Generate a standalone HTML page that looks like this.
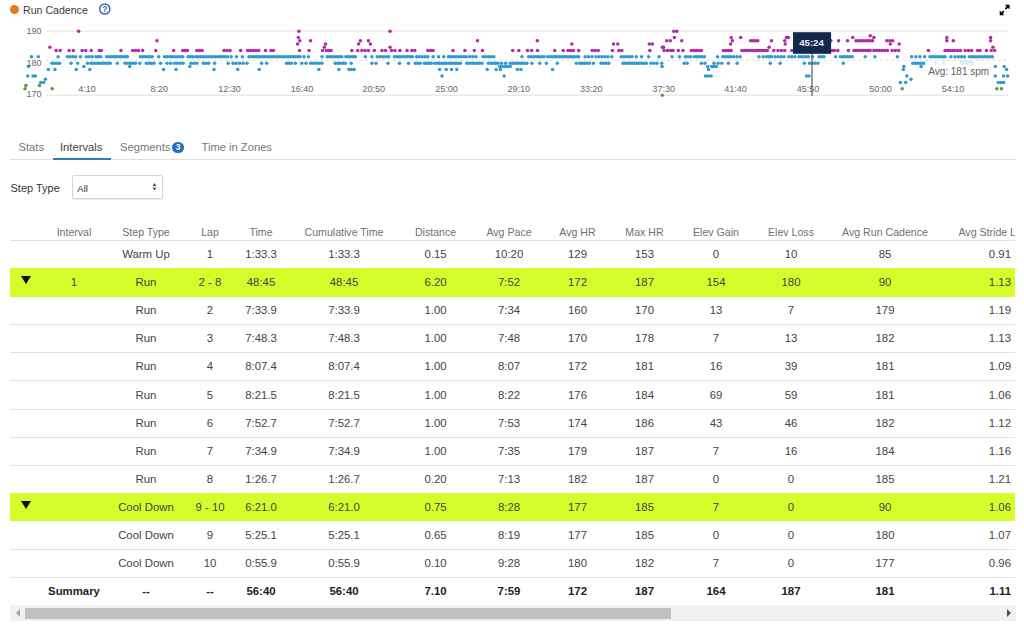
<!DOCTYPE html>
<html><head><meta charset="utf-8"><style>
html,body{margin:0;padding:0;background:#fff;}
body{width:1024px;height:625px;overflow:hidden;position:relative;font-family:"Liberation Sans",sans-serif;}
.c{position:absolute;width:120px;text-align:center;white-space:nowrap;line-height:14px;}
.h{font-size:10.6px;color:#707070;line-height:14px;}
.d{font-size:11.4px;color:#444;}
.b{font-weight:bold;color:#222;}
.r{position:absolute;right:13px;text-align:right;line-height:14px;white-space:nowrap;}
.ln{position:absolute;left:10px;width:1004.5px;height:1px;background:#e2e2e2;}
.grn{position:absolute;left:10px;width:1004.5px;background:#d5fd2c;}
.tri{position:absolute;left:20.8px;width:0;height:0;border-left:5px solid transparent;border-right:5px solid transparent;border-top:8px solid #111;}
.tab{position:absolute;top:140px;font-size:11.2px;color:#777;line-height:14px;white-space:nowrap;}
</style></head><body>
<div style="position:absolute;left:9.8px;top:5px;width:9px;height:9px;border-radius:50%;background:#e8791a"></div>
<div style="position:absolute;left:23px;top:3px;font-size:10.6px;color:#3a3a3a;line-height:14px;white-space:nowrap">Run Cadence</div>
<svg width="16" height="16" style="position:absolute;left:97px;top:1px" viewBox="0 0 16 16"><circle cx="7.8" cy="8" r="5.1" fill="none" stroke="#3d70aa" stroke-width="1.5"/><text x="7.8" y="11.1" text-anchor="middle" font-size="9" font-weight="bold" fill="#4a6a98" font-family="Liberation Sans">?</text></svg>
<svg width="14" height="14" style="position:absolute;left:998px;top:3px" viewBox="0 0 14 14"><path d="M6.9 1.8 H11.6 V6.5 Z M1.7 12.2 V7.5 L6.4 12.2 Z" fill="#000"/><path d="M9.6 3.8 L7.4 6 M3.7 10.3 L5.9 8.1" stroke="#000" stroke-width="1.8"/></svg>
<svg width="1024" height="110" style="position:absolute;left:0;top:0">
<line x1="46" y1="31.2" x2="1008" y2="31.2" stroke="#e4e4e4" stroke-width="1"/>
<line x1="46" y1="95.2" x2="1008" y2="95.2" stroke="#e0e0e0" stroke-width="1"/>
<line x1="46" y1="60.2" x2="1008" y2="60.2" stroke="#dcd8cc" stroke-width="1" stroke-dasharray="2.5 3.1"/>
<circle cx="78.6" cy="31.2" r="1.75" fill="#b02aa2"/>
<circle cx="298.9" cy="31.2" r="1.75" fill="#b02aa2"/>
<circle cx="390.0" cy="31.2" r="1.75" fill="#b02aa2"/>
<circle cx="673.9" cy="31.2" r="1.75" fill="#b02aa2"/>
<circle cx="676.8" cy="31.2" r="1.75" fill="#b02aa2"/>
<circle cx="298.3" cy="37.6" r="1.75" fill="#b02aa2"/>
<circle cx="674.4" cy="37.6" r="1.75" fill="#b02aa2"/>
<circle cx="731.2" cy="37.6" r="1.75" fill="#b02aa2"/>
<circle cx="740.7" cy="37.6" r="1.75" fill="#b02aa2"/>
<circle cx="786.5" cy="37.6" r="1.75" fill="#b02aa2"/>
<circle cx="788.3" cy="37.6" r="1.75" fill="#b02aa2"/>
<circle cx="852.8" cy="37.6" r="1.75" fill="#b02aa2"/>
<circle cx="873.8" cy="37.6" r="1.75" fill="#b02aa2"/>
<circle cx="946.8" cy="37.6" r="1.75" fill="#b02aa2"/>
<circle cx="990.6" cy="37.6" r="1.75" fill="#b02aa2"/>
<circle cx="870.2" cy="35.7" r="1.75" fill="#b02aa2"/>
<circle cx="157.0" cy="40.8" r="1.75" fill="#b02aa2"/>
<circle cx="299.8" cy="40.8" r="1.75" fill="#b02aa2"/>
<circle cx="310.5" cy="40.8" r="1.75" fill="#b02aa2"/>
<circle cx="360.4" cy="40.8" r="1.75" fill="#b02aa2"/>
<circle cx="368.4" cy="40.8" r="1.75" fill="#b02aa2"/>
<circle cx="477.5" cy="40.8" r="1.75" fill="#b02aa2"/>
<circle cx="537.3" cy="40.8" r="1.75" fill="#b02aa2"/>
<circle cx="666.7" cy="40.8" r="1.75" fill="#b02aa2"/>
<circle cx="670.3" cy="40.8" r="1.75" fill="#b02aa2"/>
<circle cx="681.8" cy="40.8" r="1.75" fill="#b02aa2"/>
<circle cx="732.4" cy="40.8" r="1.75" fill="#b02aa2"/>
<circle cx="750.7" cy="40.8" r="1.75" fill="#b02aa2"/>
<circle cx="753.1" cy="40.8" r="1.75" fill="#b02aa2"/>
<circle cx="755.4" cy="40.8" r="1.75" fill="#b02aa2"/>
<circle cx="757.8" cy="40.8" r="1.75" fill="#b02aa2"/>
<circle cx="771.5" cy="40.8" r="1.75" fill="#b02aa2"/>
<circle cx="784.7" cy="40.8" r="1.75" fill="#b02aa2"/>
<circle cx="830.9" cy="40.8" r="1.75" fill="#b02aa2"/>
<circle cx="838.6" cy="40.8" r="1.75" fill="#b02aa2"/>
<circle cx="847.5" cy="40.8" r="1.75" fill="#b02aa2"/>
<circle cx="856.0" cy="40.8" r="1.75" fill="#b02aa2"/>
<circle cx="858.4" cy="40.8" r="1.75" fill="#b02aa2"/>
<circle cx="860.7" cy="40.8" r="1.75" fill="#b02aa2"/>
<circle cx="863.1" cy="40.8" r="1.75" fill="#b02aa2"/>
<circle cx="865.5" cy="40.8" r="1.75" fill="#b02aa2"/>
<circle cx="867.9" cy="40.8" r="1.75" fill="#b02aa2"/>
<circle cx="870.2" cy="40.8" r="1.75" fill="#b02aa2"/>
<circle cx="872.6" cy="40.8" r="1.75" fill="#b02aa2"/>
<circle cx="886.8" cy="40.8" r="1.75" fill="#b02aa2"/>
<circle cx="889.8" cy="40.8" r="1.75" fill="#b02aa2"/>
<circle cx="892.7" cy="40.8" r="1.75" fill="#b02aa2"/>
<circle cx="946.8" cy="40.8" r="1.75" fill="#b02aa2"/>
<circle cx="953.3" cy="40.8" r="1.75" fill="#b02aa2"/>
<circle cx="990.6" cy="40.8" r="1.75" fill="#b02aa2"/>
<circle cx="297.5" cy="44.0" r="1.75" fill="#b02aa2"/>
<circle cx="325.5" cy="44.0" r="1.75" fill="#b02aa2"/>
<circle cx="358.6" cy="44.0" r="1.75" fill="#b02aa2"/>
<circle cx="370.4" cy="44.0" r="1.75" fill="#b02aa2"/>
<circle cx="571.9" cy="44.0" r="1.75" fill="#b02aa2"/>
<circle cx="613.5" cy="44.0" r="1.75" fill="#b02aa2"/>
<circle cx="617.8" cy="44.0" r="1.75" fill="#b02aa2"/>
<circle cx="649.3" cy="44.0" r="1.75" fill="#b02aa2"/>
<circle cx="652.3" cy="44.0" r="1.75" fill="#b02aa2"/>
<circle cx="730.6" cy="44.0" r="1.75" fill="#b02aa2"/>
<circle cx="785.3" cy="44.0" r="1.75" fill="#b02aa2"/>
<circle cx="890.3" cy="44.0" r="1.75" fill="#b02aa2"/>
<circle cx="899.2" cy="44.0" r="1.75" fill="#b02aa2"/>
<circle cx="49.9" cy="47.2" r="1.75" fill="#b02aa2"/>
<circle cx="324.3" cy="47.2" r="1.75" fill="#b02aa2"/>
<circle cx="390.0" cy="47.2" r="1.75" fill="#b02aa2"/>
<circle cx="662.3" cy="47.2" r="1.75" fill="#b02aa2"/>
<circle cx="663.5" cy="47.2" r="1.75" fill="#b02aa2"/>
<circle cx="769.1" cy="47.2" r="1.75" fill="#b02aa2"/>
<circle cx="993.0" cy="47.2" r="1.75" fill="#b02aa2"/>
<circle cx="56.1" cy="50.4" r="1.75" fill="#b02aa2"/>
<circle cx="60.2" cy="50.4" r="1.75" fill="#b02aa2"/>
<circle cx="69.1" cy="50.4" r="1.75" fill="#b02aa2"/>
<circle cx="73.3" cy="50.4" r="1.75" fill="#b02aa2"/>
<circle cx="82.1" cy="50.4" r="1.75" fill="#b02aa2"/>
<circle cx="85.7" cy="50.4" r="1.75" fill="#b02aa2"/>
<circle cx="91.2" cy="50.4" r="1.75" fill="#b02aa2"/>
<circle cx="99.3" cy="50.4" r="1.75" fill="#b02aa2"/>
<circle cx="101.3" cy="50.4" r="1.75" fill="#b02aa2"/>
<circle cx="120.9" cy="50.4" r="1.75" fill="#b02aa2"/>
<circle cx="132.7" cy="50.4" r="1.75" fill="#b02aa2"/>
<circle cx="135.6" cy="50.4" r="1.75" fill="#b02aa2"/>
<circle cx="138.6" cy="50.4" r="1.75" fill="#b02aa2"/>
<circle cx="142.7" cy="50.4" r="1.75" fill="#b02aa2"/>
<circle cx="155.8" cy="50.4" r="1.75" fill="#b02aa2"/>
<circle cx="173.6" cy="50.4" r="1.75" fill="#b02aa2"/>
<circle cx="182.7" cy="50.4" r="1.75" fill="#b02aa2"/>
<circle cx="185.1" cy="50.4" r="1.75" fill="#b02aa2"/>
<circle cx="187.4" cy="50.4" r="1.75" fill="#b02aa2"/>
<circle cx="196.9" cy="50.4" r="1.75" fill="#b02aa2"/>
<circle cx="199.6" cy="50.4" r="1.75" fill="#b02aa2"/>
<circle cx="202.2" cy="50.4" r="1.75" fill="#b02aa2"/>
<circle cx="224.0" cy="50.4" r="1.75" fill="#b02aa2"/>
<circle cx="227.0" cy="50.4" r="1.75" fill="#b02aa2"/>
<circle cx="230.0" cy="50.4" r="1.75" fill="#b02aa2"/>
<circle cx="240.6" cy="50.4" r="1.75" fill="#b02aa2"/>
<circle cx="247.7" cy="50.4" r="1.75" fill="#b02aa2"/>
<circle cx="250.4" cy="50.4" r="1.75" fill="#b02aa2"/>
<circle cx="253.2" cy="50.4" r="1.75" fill="#b02aa2"/>
<circle cx="255.9" cy="50.4" r="1.75" fill="#b02aa2"/>
<circle cx="258.7" cy="50.4" r="1.75" fill="#b02aa2"/>
<circle cx="265.5" cy="50.4" r="1.75" fill="#b02aa2"/>
<circle cx="271.0" cy="50.4" r="1.75" fill="#b02aa2"/>
<circle cx="273.4" cy="50.4" r="1.75" fill="#b02aa2"/>
<circle cx="299.5" cy="50.4" r="1.75" fill="#b02aa2"/>
<circle cx="309.0" cy="50.4" r="1.75" fill="#b02aa2"/>
<circle cx="322.6" cy="50.4" r="1.75" fill="#b02aa2"/>
<circle cx="326.4" cy="50.4" r="1.75" fill="#b02aa2"/>
<circle cx="328.8" cy="50.4" r="1.75" fill="#b02aa2"/>
<circle cx="331.1" cy="50.4" r="1.75" fill="#b02aa2"/>
<circle cx="351.8" cy="50.4" r="1.75" fill="#b02aa2"/>
<circle cx="357.7" cy="50.4" r="1.75" fill="#b02aa2"/>
<circle cx="361.9" cy="50.4" r="1.75" fill="#b02aa2"/>
<circle cx="365.1" cy="50.4" r="1.75" fill="#b02aa2"/>
<circle cx="368.4" cy="50.4" r="1.75" fill="#b02aa2"/>
<circle cx="374.3" cy="50.4" r="1.75" fill="#b02aa2"/>
<circle cx="382.0" cy="50.4" r="1.75" fill="#b02aa2"/>
<circle cx="385.5" cy="50.4" r="1.75" fill="#b02aa2"/>
<circle cx="391.5" cy="50.4" r="1.75" fill="#b02aa2"/>
<circle cx="395.0" cy="50.4" r="1.75" fill="#b02aa2"/>
<circle cx="399.9" cy="50.4" r="1.75" fill="#b02aa2"/>
<circle cx="407.1" cy="50.4" r="1.75" fill="#b02aa2"/>
<circle cx="411.8" cy="50.4" r="1.75" fill="#b02aa2"/>
<circle cx="414.8" cy="50.4" r="1.75" fill="#b02aa2"/>
<circle cx="427.8" cy="50.4" r="1.75" fill="#b02aa2"/>
<circle cx="430.5" cy="50.4" r="1.75" fill="#b02aa2"/>
<circle cx="433.1" cy="50.4" r="1.75" fill="#b02aa2"/>
<circle cx="453.0" cy="50.4" r="1.75" fill="#b02aa2"/>
<circle cx="464.9" cy="50.4" r="1.75" fill="#b02aa2"/>
<circle cx="474.3" cy="50.4" r="1.75" fill="#b02aa2"/>
<circle cx="482.5" cy="50.4" r="1.75" fill="#b02aa2"/>
<circle cx="512.7" cy="50.4" r="1.75" fill="#b02aa2"/>
<circle cx="518.8" cy="50.4" r="1.75" fill="#b02aa2"/>
<circle cx="527.5" cy="50.4" r="1.75" fill="#b02aa2"/>
<circle cx="531.6" cy="50.4" r="1.75" fill="#b02aa2"/>
<circle cx="537.5" cy="50.4" r="1.75" fill="#b02aa2"/>
<circle cx="554.7" cy="50.4" r="1.75" fill="#b02aa2"/>
<circle cx="563.2" cy="50.4" r="1.75" fill="#b02aa2"/>
<circle cx="568.0" cy="50.4" r="1.75" fill="#b02aa2"/>
<circle cx="570.6" cy="50.4" r="1.75" fill="#b02aa2"/>
<circle cx="573.3" cy="50.4" r="1.75" fill="#b02aa2"/>
<circle cx="578.6" cy="50.4" r="1.75" fill="#b02aa2"/>
<circle cx="592.2" cy="50.4" r="1.75" fill="#b02aa2"/>
<circle cx="595.2" cy="50.4" r="1.75" fill="#b02aa2"/>
<circle cx="598.2" cy="50.4" r="1.75" fill="#b02aa2"/>
<circle cx="612.4" cy="50.4" r="1.75" fill="#b02aa2"/>
<circle cx="618.9" cy="50.4" r="1.75" fill="#b02aa2"/>
<circle cx="621.8" cy="50.4" r="1.75" fill="#b02aa2"/>
<circle cx="649.9" cy="50.4" r="1.75" fill="#b02aa2"/>
<circle cx="664.1" cy="50.4" r="1.75" fill="#b02aa2"/>
<circle cx="667.4" cy="50.4" r="1.75" fill="#b02aa2"/>
<circle cx="670.6" cy="50.4" r="1.75" fill="#b02aa2"/>
<circle cx="673.0" cy="50.4" r="1.75" fill="#b02aa2"/>
<circle cx="678.3" cy="50.4" r="1.75" fill="#b02aa2"/>
<circle cx="683.0" cy="50.4" r="1.75" fill="#b02aa2"/>
<circle cx="691.3" cy="50.4" r="1.75" fill="#b02aa2"/>
<circle cx="693.8" cy="50.4" r="1.75" fill="#b02aa2"/>
<circle cx="696.3" cy="50.4" r="1.75" fill="#b02aa2"/>
<circle cx="698.9" cy="50.4" r="1.75" fill="#b02aa2"/>
<circle cx="701.4" cy="50.4" r="1.75" fill="#b02aa2"/>
<circle cx="723.5" cy="50.4" r="1.75" fill="#b02aa2"/>
<circle cx="726.1" cy="50.4" r="1.75" fill="#b02aa2"/>
<circle cx="728.6" cy="50.4" r="1.75" fill="#b02aa2"/>
<circle cx="731.2" cy="50.4" r="1.75" fill="#b02aa2"/>
<circle cx="741.9" cy="50.4" r="1.75" fill="#b02aa2"/>
<circle cx="744.2" cy="50.4" r="1.75" fill="#b02aa2"/>
<circle cx="746.5" cy="50.4" r="1.75" fill="#b02aa2"/>
<circle cx="748.8" cy="50.4" r="1.75" fill="#b02aa2"/>
<circle cx="751.1" cy="50.4" r="1.75" fill="#b02aa2"/>
<circle cx="753.4" cy="50.4" r="1.75" fill="#b02aa2"/>
<circle cx="755.8" cy="50.4" r="1.75" fill="#b02aa2"/>
<circle cx="758.1" cy="50.4" r="1.75" fill="#b02aa2"/>
<circle cx="760.4" cy="50.4" r="1.75" fill="#b02aa2"/>
<circle cx="762.7" cy="50.4" r="1.75" fill="#b02aa2"/>
<circle cx="765.0" cy="50.4" r="1.75" fill="#b02aa2"/>
<circle cx="767.3" cy="50.4" r="1.75" fill="#b02aa2"/>
<circle cx="773.8" cy="50.4" r="1.75" fill="#b02aa2"/>
<circle cx="778.0" cy="50.4" r="1.75" fill="#b02aa2"/>
<circle cx="781.4" cy="50.4" r="1.75" fill="#b02aa2"/>
<circle cx="784.7" cy="50.4" r="1.75" fill="#b02aa2"/>
<circle cx="791.8" cy="50.4" r="1.75" fill="#b02aa2"/>
<circle cx="832.0" cy="50.4" r="1.75" fill="#b02aa2"/>
<circle cx="834.4" cy="50.4" r="1.75" fill="#b02aa2"/>
<circle cx="837.8" cy="50.4" r="1.75" fill="#b02aa2"/>
<circle cx="848.4" cy="50.4" r="1.75" fill="#b02aa2"/>
<circle cx="854.0" cy="50.4" r="1.75" fill="#b02aa2"/>
<circle cx="856.3" cy="50.4" r="1.75" fill="#b02aa2"/>
<circle cx="858.6" cy="50.4" r="1.75" fill="#b02aa2"/>
<circle cx="860.9" cy="50.4" r="1.75" fill="#b02aa2"/>
<circle cx="863.3" cy="50.4" r="1.75" fill="#b02aa2"/>
<circle cx="865.6" cy="50.4" r="1.75" fill="#b02aa2"/>
<circle cx="867.9" cy="50.4" r="1.75" fill="#b02aa2"/>
<circle cx="870.2" cy="50.4" r="1.75" fill="#b02aa2"/>
<circle cx="873.8" cy="50.4" r="1.75" fill="#b02aa2"/>
<circle cx="876.5" cy="50.4" r="1.75" fill="#b02aa2"/>
<circle cx="879.2" cy="50.4" r="1.75" fill="#b02aa2"/>
<circle cx="882.0" cy="50.4" r="1.75" fill="#b02aa2"/>
<circle cx="884.7" cy="50.4" r="1.75" fill="#b02aa2"/>
<circle cx="887.4" cy="50.4" r="1.75" fill="#b02aa2"/>
<circle cx="892.1" cy="50.4" r="1.75" fill="#b02aa2"/>
<circle cx="895.4" cy="50.4" r="1.75" fill="#b02aa2"/>
<circle cx="898.6" cy="50.4" r="1.75" fill="#b02aa2"/>
<circle cx="928.4" cy="50.4" r="1.75" fill="#b02aa2"/>
<circle cx="945.0" cy="50.4" r="1.75" fill="#b02aa2"/>
<circle cx="947.6" cy="50.4" r="1.75" fill="#b02aa2"/>
<circle cx="950.1" cy="50.4" r="1.75" fill="#b02aa2"/>
<circle cx="952.7" cy="50.4" r="1.75" fill="#b02aa2"/>
<circle cx="954.5" cy="50.4" r="1.75" fill="#b02aa2"/>
<circle cx="957.5" cy="50.4" r="1.75" fill="#b02aa2"/>
<circle cx="960.4" cy="50.4" r="1.75" fill="#b02aa2"/>
<circle cx="965.1" cy="50.4" r="1.75" fill="#b02aa2"/>
<circle cx="968.4" cy="50.4" r="1.75" fill="#b02aa2"/>
<circle cx="971.6" cy="50.4" r="1.75" fill="#b02aa2"/>
<circle cx="977.6" cy="50.4" r="1.75" fill="#b02aa2"/>
<circle cx="980.0" cy="50.4" r="1.75" fill="#b02aa2"/>
<circle cx="986.4" cy="50.4" r="1.75" fill="#b02aa2"/>
<circle cx="991.2" cy="50.4" r="1.75" fill="#b02aa2"/>
<circle cx="994.7" cy="50.4" r="1.75" fill="#b02aa2"/>
<circle cx="31.5" cy="56.8" r="1.75" fill="#2e9ad0"/>
<circle cx="38.3" cy="56.8" r="1.75" fill="#2e9ad0"/>
<circle cx="58.1" cy="56.8" r="1.75" fill="#2e9ad0"/>
<circle cx="67.3" cy="56.8" r="1.75" fill="#2e9ad0"/>
<circle cx="70.1" cy="56.8" r="1.75" fill="#2e9ad0"/>
<circle cx="72.8" cy="56.8" r="1.75" fill="#2e9ad0"/>
<circle cx="75.6" cy="56.8" r="1.75" fill="#2e9ad0"/>
<circle cx="80.4" cy="56.8" r="1.75" fill="#2e9ad0"/>
<circle cx="86.3" cy="56.8" r="1.75" fill="#2e9ad0"/>
<circle cx="89.2" cy="56.8" r="1.75" fill="#2e9ad0"/>
<circle cx="92.2" cy="56.8" r="1.75" fill="#2e9ad0"/>
<circle cx="96.0" cy="56.8" r="1.75" fill="#2e9ad0"/>
<circle cx="98.3" cy="56.8" r="1.75" fill="#2e9ad0"/>
<circle cx="100.7" cy="56.8" r="1.75" fill="#2e9ad0"/>
<circle cx="106.7" cy="56.8" r="1.75" fill="#2e9ad0"/>
<circle cx="109.0" cy="56.8" r="1.75" fill="#2e9ad0"/>
<circle cx="111.3" cy="56.8" r="1.75" fill="#2e9ad0"/>
<circle cx="113.6" cy="56.8" r="1.75" fill="#2e9ad0"/>
<circle cx="115.9" cy="56.8" r="1.75" fill="#2e9ad0"/>
<circle cx="118.2" cy="56.8" r="1.75" fill="#2e9ad0"/>
<circle cx="120.5" cy="56.8" r="1.75" fill="#2e9ad0"/>
<circle cx="122.8" cy="56.8" r="1.75" fill="#2e9ad0"/>
<circle cx="125.1" cy="56.8" r="1.75" fill="#2e9ad0"/>
<circle cx="127.4" cy="56.8" r="1.75" fill="#2e9ad0"/>
<circle cx="140.4" cy="56.8" r="1.75" fill="#2e9ad0"/>
<circle cx="142.8" cy="56.8" r="1.75" fill="#2e9ad0"/>
<circle cx="145.1" cy="56.8" r="1.75" fill="#2e9ad0"/>
<circle cx="147.5" cy="56.8" r="1.75" fill="#2e9ad0"/>
<circle cx="149.8" cy="56.8" r="1.75" fill="#2e9ad0"/>
<circle cx="152.2" cy="56.8" r="1.75" fill="#2e9ad0"/>
<circle cx="158.7" cy="56.8" r="1.75" fill="#2e9ad0"/>
<circle cx="164.6" cy="56.8" r="1.75" fill="#2e9ad0"/>
<circle cx="167.2" cy="56.8" r="1.75" fill="#2e9ad0"/>
<circle cx="169.8" cy="56.8" r="1.75" fill="#2e9ad0"/>
<circle cx="172.4" cy="56.8" r="1.75" fill="#2e9ad0"/>
<circle cx="174.9" cy="56.8" r="1.75" fill="#2e9ad0"/>
<circle cx="177.5" cy="56.8" r="1.75" fill="#2e9ad0"/>
<circle cx="180.1" cy="56.8" r="1.75" fill="#2e9ad0"/>
<circle cx="182.7" cy="56.8" r="1.75" fill="#2e9ad0"/>
<circle cx="188.0" cy="56.8" r="1.75" fill="#2e9ad0"/>
<circle cx="190.3" cy="56.8" r="1.75" fill="#2e9ad0"/>
<circle cx="192.7" cy="56.8" r="1.75" fill="#2e9ad0"/>
<circle cx="195.7" cy="56.8" r="1.75" fill="#2e9ad0"/>
<circle cx="198.2" cy="56.8" r="1.75" fill="#2e9ad0"/>
<circle cx="200.6" cy="56.8" r="1.75" fill="#2e9ad0"/>
<circle cx="203.1" cy="56.8" r="1.75" fill="#2e9ad0"/>
<circle cx="205.5" cy="56.8" r="1.75" fill="#2e9ad0"/>
<circle cx="208.0" cy="56.8" r="1.75" fill="#2e9ad0"/>
<circle cx="210.4" cy="56.8" r="1.75" fill="#2e9ad0"/>
<circle cx="212.9" cy="56.8" r="1.75" fill="#2e9ad0"/>
<circle cx="215.3" cy="56.8" r="1.75" fill="#2e9ad0"/>
<circle cx="217.8" cy="56.8" r="1.75" fill="#2e9ad0"/>
<circle cx="220.2" cy="56.8" r="1.75" fill="#2e9ad0"/>
<circle cx="222.7" cy="56.8" r="1.75" fill="#2e9ad0"/>
<circle cx="225.1" cy="56.8" r="1.75" fill="#2e9ad0"/>
<circle cx="227.6" cy="56.8" r="1.75" fill="#2e9ad0"/>
<circle cx="231.2" cy="56.8" r="1.75" fill="#2e9ad0"/>
<circle cx="236.5" cy="56.8" r="1.75" fill="#2e9ad0"/>
<circle cx="242.4" cy="56.8" r="1.75" fill="#2e9ad0"/>
<circle cx="249.0" cy="56.8" r="1.75" fill="#2e9ad0"/>
<circle cx="251.3" cy="56.8" r="1.75" fill="#2e9ad0"/>
<circle cx="253.6" cy="56.8" r="1.75" fill="#2e9ad0"/>
<circle cx="256.0" cy="56.8" r="1.75" fill="#2e9ad0"/>
<circle cx="258.3" cy="56.8" r="1.75" fill="#2e9ad0"/>
<circle cx="260.6" cy="56.8" r="1.75" fill="#2e9ad0"/>
<circle cx="262.9" cy="56.8" r="1.75" fill="#2e9ad0"/>
<circle cx="265.2" cy="56.8" r="1.75" fill="#2e9ad0"/>
<circle cx="267.6" cy="56.8" r="1.75" fill="#2e9ad0"/>
<circle cx="269.9" cy="56.8" r="1.75" fill="#2e9ad0"/>
<circle cx="272.2" cy="56.8" r="1.75" fill="#2e9ad0"/>
<circle cx="274.5" cy="56.8" r="1.75" fill="#2e9ad0"/>
<circle cx="276.8" cy="56.8" r="1.75" fill="#2e9ad0"/>
<circle cx="279.1" cy="56.8" r="1.75" fill="#2e9ad0"/>
<circle cx="281.5" cy="56.8" r="1.75" fill="#2e9ad0"/>
<circle cx="283.8" cy="56.8" r="1.75" fill="#2e9ad0"/>
<circle cx="286.1" cy="56.8" r="1.75" fill="#2e9ad0"/>
<circle cx="288.4" cy="56.8" r="1.75" fill="#2e9ad0"/>
<circle cx="290.7" cy="56.8" r="1.75" fill="#2e9ad0"/>
<circle cx="293.1" cy="56.8" r="1.75" fill="#2e9ad0"/>
<circle cx="295.4" cy="56.8" r="1.75" fill="#2e9ad0"/>
<circle cx="297.7" cy="56.8" r="1.75" fill="#2e9ad0"/>
<circle cx="300.0" cy="56.8" r="1.75" fill="#2e9ad0"/>
<circle cx="304.0" cy="56.8" r="1.75" fill="#2e9ad0"/>
<circle cx="308.4" cy="56.8" r="1.75" fill="#2e9ad0"/>
<circle cx="322.0" cy="56.8" r="1.75" fill="#2e9ad0"/>
<circle cx="327.3" cy="56.8" r="1.75" fill="#2e9ad0"/>
<circle cx="329.7" cy="56.8" r="1.75" fill="#2e9ad0"/>
<circle cx="332.1" cy="56.8" r="1.75" fill="#2e9ad0"/>
<circle cx="334.6" cy="56.8" r="1.75" fill="#2e9ad0"/>
<circle cx="337.0" cy="56.8" r="1.75" fill="#2e9ad0"/>
<circle cx="339.4" cy="56.8" r="1.75" fill="#2e9ad0"/>
<circle cx="341.8" cy="56.8" r="1.75" fill="#2e9ad0"/>
<circle cx="345.9" cy="56.8" r="1.75" fill="#2e9ad0"/>
<circle cx="348.3" cy="56.8" r="1.75" fill="#2e9ad0"/>
<circle cx="350.6" cy="56.8" r="1.75" fill="#2e9ad0"/>
<circle cx="353.0" cy="56.8" r="1.75" fill="#2e9ad0"/>
<circle cx="355.4" cy="56.8" r="1.75" fill="#2e9ad0"/>
<circle cx="365.4" cy="56.8" r="1.75" fill="#2e9ad0"/>
<circle cx="371.9" cy="56.8" r="1.75" fill="#2e9ad0"/>
<circle cx="377.3" cy="56.8" r="1.75" fill="#2e9ad0"/>
<circle cx="380.1" cy="56.8" r="1.75" fill="#2e9ad0"/>
<circle cx="382.9" cy="56.8" r="1.75" fill="#2e9ad0"/>
<circle cx="385.7" cy="56.8" r="1.75" fill="#2e9ad0"/>
<circle cx="388.5" cy="56.8" r="1.75" fill="#2e9ad0"/>
<circle cx="394.4" cy="56.8" r="1.75" fill="#2e9ad0"/>
<circle cx="397.0" cy="56.8" r="1.75" fill="#2e9ad0"/>
<circle cx="399.5" cy="56.8" r="1.75" fill="#2e9ad0"/>
<circle cx="402.1" cy="56.8" r="1.75" fill="#2e9ad0"/>
<circle cx="404.7" cy="56.8" r="1.75" fill="#2e9ad0"/>
<circle cx="407.3" cy="56.8" r="1.75" fill="#2e9ad0"/>
<circle cx="409.8" cy="56.8" r="1.75" fill="#2e9ad0"/>
<circle cx="412.4" cy="56.8" r="1.75" fill="#2e9ad0"/>
<circle cx="416.6" cy="56.8" r="1.75" fill="#2e9ad0"/>
<circle cx="419.4" cy="56.8" r="1.75" fill="#2e9ad0"/>
<circle cx="422.2" cy="56.8" r="1.75" fill="#2e9ad0"/>
<circle cx="425.0" cy="56.8" r="1.75" fill="#2e9ad0"/>
<circle cx="427.8" cy="56.8" r="1.75" fill="#2e9ad0"/>
<circle cx="433.1" cy="56.8" r="1.75" fill="#2e9ad0"/>
<circle cx="438.5" cy="56.8" r="1.75" fill="#2e9ad0"/>
<circle cx="443.8" cy="56.8" r="1.75" fill="#2e9ad0"/>
<circle cx="448.5" cy="56.8" r="1.75" fill="#2e9ad0"/>
<circle cx="451.0" cy="56.8" r="1.75" fill="#2e9ad0"/>
<circle cx="453.6" cy="56.8" r="1.75" fill="#2e9ad0"/>
<circle cx="456.1" cy="56.8" r="1.75" fill="#2e9ad0"/>
<circle cx="458.7" cy="56.8" r="1.75" fill="#2e9ad0"/>
<circle cx="461.2" cy="56.8" r="1.75" fill="#2e9ad0"/>
<circle cx="463.8" cy="56.8" r="1.75" fill="#2e9ad0"/>
<circle cx="466.3" cy="56.8" r="1.75" fill="#2e9ad0"/>
<circle cx="469.8" cy="56.8" r="1.75" fill="#2e9ad0"/>
<circle cx="472.9" cy="56.8" r="1.75" fill="#2e9ad0"/>
<circle cx="476.0" cy="56.8" r="1.75" fill="#2e9ad0"/>
<circle cx="483.1" cy="56.8" r="1.75" fill="#2e9ad0"/>
<circle cx="485.8" cy="56.8" r="1.75" fill="#2e9ad0"/>
<circle cx="488.5" cy="56.8" r="1.75" fill="#2e9ad0"/>
<circle cx="491.1" cy="56.8" r="1.75" fill="#2e9ad0"/>
<circle cx="493.8" cy="56.8" r="1.75" fill="#2e9ad0"/>
<circle cx="521.9" cy="56.8" r="1.75" fill="#2e9ad0"/>
<circle cx="528.7" cy="56.8" r="1.75" fill="#2e9ad0"/>
<circle cx="531.2" cy="56.8" r="1.75" fill="#2e9ad0"/>
<circle cx="533.8" cy="56.8" r="1.75" fill="#2e9ad0"/>
<circle cx="536.4" cy="56.8" r="1.75" fill="#2e9ad0"/>
<circle cx="538.9" cy="56.8" r="1.75" fill="#2e9ad0"/>
<circle cx="541.5" cy="56.8" r="1.75" fill="#2e9ad0"/>
<circle cx="544.0" cy="56.8" r="1.75" fill="#2e9ad0"/>
<circle cx="547.6" cy="56.8" r="1.75" fill="#2e9ad0"/>
<circle cx="550.0" cy="56.8" r="1.75" fill="#2e9ad0"/>
<circle cx="552.4" cy="56.8" r="1.75" fill="#2e9ad0"/>
<circle cx="554.8" cy="56.8" r="1.75" fill="#2e9ad0"/>
<circle cx="557.1" cy="56.8" r="1.75" fill="#2e9ad0"/>
<circle cx="559.5" cy="56.8" r="1.75" fill="#2e9ad0"/>
<circle cx="561.9" cy="56.8" r="1.75" fill="#2e9ad0"/>
<circle cx="564.3" cy="56.8" r="1.75" fill="#2e9ad0"/>
<circle cx="566.7" cy="56.8" r="1.75" fill="#2e9ad0"/>
<circle cx="569.1" cy="56.8" r="1.75" fill="#2e9ad0"/>
<circle cx="571.4" cy="56.8" r="1.75" fill="#2e9ad0"/>
<circle cx="573.8" cy="56.8" r="1.75" fill="#2e9ad0"/>
<circle cx="576.2" cy="56.8" r="1.75" fill="#2e9ad0"/>
<circle cx="578.6" cy="56.8" r="1.75" fill="#2e9ad0"/>
<circle cx="585.1" cy="56.8" r="1.75" fill="#2e9ad0"/>
<circle cx="588.5" cy="56.8" r="1.75" fill="#2e9ad0"/>
<circle cx="592.0" cy="56.8" r="1.75" fill="#2e9ad0"/>
<circle cx="596.0" cy="56.8" r="1.75" fill="#2e9ad0"/>
<circle cx="599.0" cy="56.8" r="1.75" fill="#2e9ad0"/>
<circle cx="602.0" cy="56.8" r="1.75" fill="#2e9ad0"/>
<circle cx="605.0" cy="56.8" r="1.75" fill="#2e9ad0"/>
<circle cx="608.0" cy="56.8" r="1.75" fill="#2e9ad0"/>
<circle cx="611.8" cy="56.8" r="1.75" fill="#2e9ad0"/>
<circle cx="621.2" cy="56.8" r="1.75" fill="#2e9ad0"/>
<circle cx="623.9" cy="56.8" r="1.75" fill="#2e9ad0"/>
<circle cx="626.6" cy="56.8" r="1.75" fill="#2e9ad0"/>
<circle cx="629.3" cy="56.8" r="1.75" fill="#2e9ad0"/>
<circle cx="632.0" cy="56.8" r="1.75" fill="#2e9ad0"/>
<circle cx="636.3" cy="56.8" r="1.75" fill="#2e9ad0"/>
<circle cx="641.6" cy="56.8" r="1.75" fill="#2e9ad0"/>
<circle cx="648.7" cy="56.8" r="1.75" fill="#2e9ad0"/>
<circle cx="659.0" cy="56.8" r="1.75" fill="#2e9ad0"/>
<circle cx="672.0" cy="56.8" r="1.75" fill="#2e9ad0"/>
<circle cx="679.5" cy="56.8" r="1.75" fill="#2e9ad0"/>
<circle cx="685.4" cy="56.8" r="1.75" fill="#2e9ad0"/>
<circle cx="688.0" cy="56.8" r="1.75" fill="#2e9ad0"/>
<circle cx="690.7" cy="56.8" r="1.75" fill="#2e9ad0"/>
<circle cx="694.3" cy="56.8" r="1.75" fill="#2e9ad0"/>
<circle cx="696.8" cy="56.8" r="1.75" fill="#2e9ad0"/>
<circle cx="699.3" cy="56.8" r="1.75" fill="#2e9ad0"/>
<circle cx="701.8" cy="56.8" r="1.75" fill="#2e9ad0"/>
<circle cx="704.3" cy="56.8" r="1.75" fill="#2e9ad0"/>
<circle cx="717.6" cy="56.8" r="1.75" fill="#2e9ad0"/>
<circle cx="722.9" cy="56.8" r="1.75" fill="#2e9ad0"/>
<circle cx="725.5" cy="56.8" r="1.75" fill="#2e9ad0"/>
<circle cx="728.0" cy="56.8" r="1.75" fill="#2e9ad0"/>
<circle cx="730.6" cy="56.8" r="1.75" fill="#2e9ad0"/>
<circle cx="733.6" cy="56.8" r="1.75" fill="#2e9ad0"/>
<circle cx="736.9" cy="56.8" r="1.75" fill="#2e9ad0"/>
<circle cx="740.1" cy="56.8" r="1.75" fill="#2e9ad0"/>
<circle cx="759.0" cy="56.8" r="1.75" fill="#2e9ad0"/>
<circle cx="763.2" cy="56.8" r="1.75" fill="#2e9ad0"/>
<circle cx="766.7" cy="56.8" r="1.75" fill="#2e9ad0"/>
<circle cx="769.1" cy="56.8" r="1.75" fill="#2e9ad0"/>
<circle cx="771.5" cy="56.8" r="1.75" fill="#2e9ad0"/>
<circle cx="775.0" cy="56.8" r="1.75" fill="#2e9ad0"/>
<circle cx="778.0" cy="56.8" r="1.75" fill="#2e9ad0"/>
<circle cx="781.0" cy="56.8" r="1.75" fill="#2e9ad0"/>
<circle cx="784.0" cy="56.8" r="1.75" fill="#2e9ad0"/>
<circle cx="788.9" cy="56.8" r="1.75" fill="#2e9ad0"/>
<circle cx="791.8" cy="56.8" r="1.75" fill="#2e9ad0"/>
<circle cx="794.8" cy="56.8" r="1.75" fill="#2e9ad0"/>
<circle cx="798.9" cy="56.8" r="1.75" fill="#2e9ad0"/>
<circle cx="801.3" cy="56.8" r="1.75" fill="#2e9ad0"/>
<circle cx="803.6" cy="56.8" r="1.75" fill="#2e9ad0"/>
<circle cx="806.0" cy="56.8" r="1.75" fill="#2e9ad0"/>
<circle cx="808.4" cy="56.8" r="1.75" fill="#2e9ad0"/>
<circle cx="812.5" cy="56.8" r="1.75" fill="#2e9ad0"/>
<circle cx="819.0" cy="56.8" r="1.75" fill="#2e9ad0"/>
<circle cx="821.4" cy="56.8" r="1.75" fill="#2e9ad0"/>
<circle cx="823.8" cy="56.8" r="1.75" fill="#2e9ad0"/>
<circle cx="835.6" cy="56.8" r="1.75" fill="#2e9ad0"/>
<circle cx="840.4" cy="56.8" r="1.75" fill="#2e9ad0"/>
<circle cx="842.8" cy="56.8" r="1.75" fill="#2e9ad0"/>
<circle cx="845.1" cy="56.8" r="1.75" fill="#2e9ad0"/>
<circle cx="847.5" cy="56.8" r="1.75" fill="#2e9ad0"/>
<circle cx="849.8" cy="56.8" r="1.75" fill="#2e9ad0"/>
<circle cx="852.2" cy="56.8" r="1.75" fill="#2e9ad0"/>
<circle cx="865.2" cy="56.8" r="1.75" fill="#2e9ad0"/>
<circle cx="874.9" cy="56.8" r="1.75" fill="#2e9ad0"/>
<circle cx="897.4" cy="56.8" r="1.75" fill="#2e9ad0"/>
<circle cx="911.6" cy="56.8" r="1.75" fill="#2e9ad0"/>
<circle cx="915.8" cy="56.8" r="1.75" fill="#2e9ad0"/>
<circle cx="919.9" cy="56.8" r="1.75" fill="#2e9ad0"/>
<circle cx="924.6" cy="56.8" r="1.75" fill="#2e9ad0"/>
<circle cx="930.0" cy="56.8" r="1.75" fill="#2e9ad0"/>
<circle cx="932.5" cy="56.8" r="1.75" fill="#2e9ad0"/>
<circle cx="935.0" cy="56.8" r="1.75" fill="#2e9ad0"/>
<circle cx="937.5" cy="56.8" r="1.75" fill="#2e9ad0"/>
<circle cx="940.0" cy="56.8" r="1.75" fill="#2e9ad0"/>
<circle cx="942.5" cy="56.8" r="1.75" fill="#2e9ad0"/>
<circle cx="945.0" cy="56.8" r="1.75" fill="#2e9ad0"/>
<circle cx="950.9" cy="56.8" r="1.75" fill="#2e9ad0"/>
<circle cx="955.0" cy="56.8" r="1.75" fill="#2e9ad0"/>
<circle cx="958.3" cy="56.8" r="1.75" fill="#2e9ad0"/>
<circle cx="961.6" cy="56.8" r="1.75" fill="#2e9ad0"/>
<circle cx="964.5" cy="56.8" r="1.75" fill="#2e9ad0"/>
<circle cx="969.3" cy="56.8" r="1.75" fill="#2e9ad0"/>
<circle cx="971.9" cy="56.8" r="1.75" fill="#2e9ad0"/>
<circle cx="974.4" cy="56.8" r="1.75" fill="#2e9ad0"/>
<circle cx="977.0" cy="56.8" r="1.75" fill="#2e9ad0"/>
<circle cx="979.3" cy="56.8" r="1.75" fill="#2e9ad0"/>
<circle cx="981.9" cy="56.8" r="1.75" fill="#2e9ad0"/>
<circle cx="984.5" cy="56.8" r="1.75" fill="#2e9ad0"/>
<circle cx="987.2" cy="56.8" r="1.75" fill="#2e9ad0"/>
<circle cx="989.8" cy="56.8" r="1.75" fill="#2e9ad0"/>
<circle cx="992.4" cy="56.8" r="1.75" fill="#2e9ad0"/>
<circle cx="52.0" cy="63.2" r="1.75" fill="#2e9ad0"/>
<circle cx="54.5" cy="63.2" r="1.75" fill="#2e9ad0"/>
<circle cx="57.1" cy="63.2" r="1.75" fill="#2e9ad0"/>
<circle cx="59.6" cy="63.2" r="1.75" fill="#2e9ad0"/>
<circle cx="71.1" cy="63.2" r="1.75" fill="#2e9ad0"/>
<circle cx="77.6" cy="63.2" r="1.75" fill="#2e9ad0"/>
<circle cx="87.5" cy="63.2" r="1.75" fill="#2e9ad0"/>
<circle cx="91.0" cy="63.2" r="1.75" fill="#2e9ad0"/>
<circle cx="93.4" cy="63.2" r="1.75" fill="#2e9ad0"/>
<circle cx="95.8" cy="63.2" r="1.75" fill="#2e9ad0"/>
<circle cx="98.2" cy="63.2" r="1.75" fill="#2e9ad0"/>
<circle cx="100.6" cy="63.2" r="1.75" fill="#2e9ad0"/>
<circle cx="103.0" cy="63.2" r="1.75" fill="#2e9ad0"/>
<circle cx="105.4" cy="63.2" r="1.75" fill="#2e9ad0"/>
<circle cx="107.8" cy="63.2" r="1.75" fill="#2e9ad0"/>
<circle cx="110.2" cy="63.2" r="1.75" fill="#2e9ad0"/>
<circle cx="117.3" cy="63.2" r="1.75" fill="#2e9ad0"/>
<circle cx="125.0" cy="63.2" r="1.75" fill="#2e9ad0"/>
<circle cx="127.7" cy="63.2" r="1.75" fill="#2e9ad0"/>
<circle cx="130.3" cy="63.2" r="1.75" fill="#2e9ad0"/>
<circle cx="132.9" cy="63.2" r="1.75" fill="#2e9ad0"/>
<circle cx="135.6" cy="63.2" r="1.75" fill="#2e9ad0"/>
<circle cx="139.8" cy="63.2" r="1.75" fill="#2e9ad0"/>
<circle cx="146.3" cy="63.2" r="1.75" fill="#2e9ad0"/>
<circle cx="148.9" cy="63.2" r="1.75" fill="#2e9ad0"/>
<circle cx="151.4" cy="63.2" r="1.75" fill="#2e9ad0"/>
<circle cx="154.0" cy="63.2" r="1.75" fill="#2e9ad0"/>
<circle cx="160.5" cy="63.2" r="1.75" fill="#2e9ad0"/>
<circle cx="167.0" cy="63.2" r="1.75" fill="#2e9ad0"/>
<circle cx="170.6" cy="63.2" r="1.75" fill="#2e9ad0"/>
<circle cx="174.4" cy="63.2" r="1.75" fill="#2e9ad0"/>
<circle cx="177.3" cy="63.2" r="1.75" fill="#2e9ad0"/>
<circle cx="180.3" cy="63.2" r="1.75" fill="#2e9ad0"/>
<circle cx="183.2" cy="63.2" r="1.75" fill="#2e9ad0"/>
<circle cx="191.0" cy="63.2" r="1.75" fill="#2e9ad0"/>
<circle cx="193.9" cy="63.2" r="1.75" fill="#2e9ad0"/>
<circle cx="196.9" cy="63.2" r="1.75" fill="#2e9ad0"/>
<circle cx="203.4" cy="63.2" r="1.75" fill="#2e9ad0"/>
<circle cx="206.1" cy="63.2" r="1.75" fill="#2e9ad0"/>
<circle cx="208.7" cy="63.2" r="1.75" fill="#2e9ad0"/>
<circle cx="214.6" cy="63.2" r="1.75" fill="#2e9ad0"/>
<circle cx="228.2" cy="63.2" r="1.75" fill="#2e9ad0"/>
<circle cx="233.0" cy="63.2" r="1.75" fill="#2e9ad0"/>
<circle cx="236.0" cy="63.2" r="1.75" fill="#2e9ad0"/>
<circle cx="239.5" cy="63.2" r="1.75" fill="#2e9ad0"/>
<circle cx="243.0" cy="63.2" r="1.75" fill="#2e9ad0"/>
<circle cx="247.0" cy="63.2" r="1.75" fill="#2e9ad0"/>
<circle cx="261.6" cy="63.2" r="1.75" fill="#2e9ad0"/>
<circle cx="266.7" cy="63.2" r="1.75" fill="#2e9ad0"/>
<circle cx="286.5" cy="63.2" r="1.75" fill="#2e9ad0"/>
<circle cx="288.9" cy="63.2" r="1.75" fill="#2e9ad0"/>
<circle cx="291.2" cy="63.2" r="1.75" fill="#2e9ad0"/>
<circle cx="295.3" cy="63.2" r="1.75" fill="#2e9ad0"/>
<circle cx="301.8" cy="63.2" r="1.75" fill="#2e9ad0"/>
<circle cx="306.0" cy="63.2" r="1.75" fill="#2e9ad0"/>
<circle cx="310.7" cy="63.2" r="1.75" fill="#2e9ad0"/>
<circle cx="313.5" cy="63.2" r="1.75" fill="#2e9ad0"/>
<circle cx="316.4" cy="63.2" r="1.75" fill="#2e9ad0"/>
<circle cx="319.2" cy="63.2" r="1.75" fill="#2e9ad0"/>
<circle cx="322.0" cy="63.2" r="1.75" fill="#2e9ad0"/>
<circle cx="335.2" cy="63.2" r="1.75" fill="#2e9ad0"/>
<circle cx="337.7" cy="63.2" r="1.75" fill="#2e9ad0"/>
<circle cx="340.2" cy="63.2" r="1.75" fill="#2e9ad0"/>
<circle cx="342.8" cy="63.2" r="1.75" fill="#2e9ad0"/>
<circle cx="345.3" cy="63.2" r="1.75" fill="#2e9ad0"/>
<circle cx="351.2" cy="63.2" r="1.75" fill="#2e9ad0"/>
<circle cx="371.9" cy="63.2" r="1.75" fill="#2e9ad0"/>
<circle cx="376.0" cy="63.2" r="1.75" fill="#2e9ad0"/>
<circle cx="387.9" cy="63.2" r="1.75" fill="#2e9ad0"/>
<circle cx="399.5" cy="63.2" r="1.75" fill="#2e9ad0"/>
<circle cx="408.5" cy="63.2" r="1.75" fill="#2e9ad0"/>
<circle cx="415.4" cy="63.2" r="1.75" fill="#2e9ad0"/>
<circle cx="417.8" cy="63.2" r="1.75" fill="#2e9ad0"/>
<circle cx="420.1" cy="63.2" r="1.75" fill="#2e9ad0"/>
<circle cx="424.3" cy="63.2" r="1.75" fill="#2e9ad0"/>
<circle cx="426.7" cy="63.2" r="1.75" fill="#2e9ad0"/>
<circle cx="429.0" cy="63.2" r="1.75" fill="#2e9ad0"/>
<circle cx="431.4" cy="63.2" r="1.75" fill="#2e9ad0"/>
<circle cx="434.9" cy="63.2" r="1.75" fill="#2e9ad0"/>
<circle cx="437.2" cy="63.2" r="1.75" fill="#2e9ad0"/>
<circle cx="439.5" cy="63.2" r="1.75" fill="#2e9ad0"/>
<circle cx="441.9" cy="63.2" r="1.75" fill="#2e9ad0"/>
<circle cx="444.2" cy="63.2" r="1.75" fill="#2e9ad0"/>
<circle cx="446.5" cy="63.2" r="1.75" fill="#2e9ad0"/>
<circle cx="448.8" cy="63.2" r="1.75" fill="#2e9ad0"/>
<circle cx="451.1" cy="63.2" r="1.75" fill="#2e9ad0"/>
<circle cx="453.4" cy="63.2" r="1.75" fill="#2e9ad0"/>
<circle cx="455.8" cy="63.2" r="1.75" fill="#2e9ad0"/>
<circle cx="458.1" cy="63.2" r="1.75" fill="#2e9ad0"/>
<circle cx="460.4" cy="63.2" r="1.75" fill="#2e9ad0"/>
<circle cx="466.9" cy="63.2" r="1.75" fill="#2e9ad0"/>
<circle cx="469.4" cy="63.2" r="1.75" fill="#2e9ad0"/>
<circle cx="471.9" cy="63.2" r="1.75" fill="#2e9ad0"/>
<circle cx="474.4" cy="63.2" r="1.75" fill="#2e9ad0"/>
<circle cx="476.9" cy="63.2" r="1.75" fill="#2e9ad0"/>
<circle cx="479.4" cy="63.2" r="1.75" fill="#2e9ad0"/>
<circle cx="481.9" cy="63.2" r="1.75" fill="#2e9ad0"/>
<circle cx="488.4" cy="63.2" r="1.75" fill="#2e9ad0"/>
<circle cx="490.8" cy="63.2" r="1.75" fill="#2e9ad0"/>
<circle cx="493.1" cy="63.2" r="1.75" fill="#2e9ad0"/>
<circle cx="495.5" cy="63.2" r="1.75" fill="#2e9ad0"/>
<circle cx="497.9" cy="63.2" r="1.75" fill="#2e9ad0"/>
<circle cx="501.4" cy="63.2" r="1.75" fill="#2e9ad0"/>
<circle cx="505.6" cy="63.2" r="1.75" fill="#2e9ad0"/>
<circle cx="510.3" cy="63.2" r="1.75" fill="#2e9ad0"/>
<circle cx="512.7" cy="63.2" r="1.75" fill="#2e9ad0"/>
<circle cx="515.0" cy="63.2" r="1.75" fill="#2e9ad0"/>
<circle cx="517.4" cy="63.2" r="1.75" fill="#2e9ad0"/>
<circle cx="519.8" cy="63.2" r="1.75" fill="#2e9ad0"/>
<circle cx="522.2" cy="63.2" r="1.75" fill="#2e9ad0"/>
<circle cx="524.5" cy="63.2" r="1.75" fill="#2e9ad0"/>
<circle cx="526.9" cy="63.2" r="1.75" fill="#2e9ad0"/>
<circle cx="531.9" cy="63.2" r="1.75" fill="#2e9ad0"/>
<circle cx="539.7" cy="63.2" r="1.75" fill="#2e9ad0"/>
<circle cx="546.4" cy="63.2" r="1.75" fill="#2e9ad0"/>
<circle cx="557.3" cy="63.2" r="1.75" fill="#2e9ad0"/>
<circle cx="576.3" cy="63.2" r="1.75" fill="#2e9ad0"/>
<circle cx="579.8" cy="63.2" r="1.75" fill="#2e9ad0"/>
<circle cx="582.2" cy="63.2" r="1.75" fill="#2e9ad0"/>
<circle cx="584.5" cy="63.2" r="1.75" fill="#2e9ad0"/>
<circle cx="586.9" cy="63.2" r="1.75" fill="#2e9ad0"/>
<circle cx="589.3" cy="63.2" r="1.75" fill="#2e9ad0"/>
<circle cx="593.4" cy="63.2" r="1.75" fill="#2e9ad0"/>
<circle cx="601.1" cy="63.2" r="1.75" fill="#2e9ad0"/>
<circle cx="603.7" cy="63.2" r="1.75" fill="#2e9ad0"/>
<circle cx="606.2" cy="63.2" r="1.75" fill="#2e9ad0"/>
<circle cx="608.8" cy="63.2" r="1.75" fill="#2e9ad0"/>
<circle cx="623.0" cy="63.2" r="1.75" fill="#2e9ad0"/>
<circle cx="625.3" cy="63.2" r="1.75" fill="#2e9ad0"/>
<circle cx="627.7" cy="63.2" r="1.75" fill="#2e9ad0"/>
<circle cx="630.0" cy="63.2" r="1.75" fill="#2e9ad0"/>
<circle cx="632.3" cy="63.2" r="1.75" fill="#2e9ad0"/>
<circle cx="634.6" cy="63.2" r="1.75" fill="#2e9ad0"/>
<circle cx="637.0" cy="63.2" r="1.75" fill="#2e9ad0"/>
<circle cx="639.3" cy="63.2" r="1.75" fill="#2e9ad0"/>
<circle cx="641.6" cy="63.2" r="1.75" fill="#2e9ad0"/>
<circle cx="644.0" cy="63.2" r="1.75" fill="#2e9ad0"/>
<circle cx="646.3" cy="63.2" r="1.75" fill="#2e9ad0"/>
<circle cx="651.0" cy="63.2" r="1.75" fill="#2e9ad0"/>
<circle cx="654.0" cy="63.2" r="1.75" fill="#2e9ad0"/>
<circle cx="657.0" cy="63.2" r="1.75" fill="#2e9ad0"/>
<circle cx="661.7" cy="63.2" r="1.75" fill="#2e9ad0"/>
<circle cx="684.2" cy="63.2" r="1.75" fill="#2e9ad0"/>
<circle cx="687.2" cy="63.2" r="1.75" fill="#2e9ad0"/>
<circle cx="701.4" cy="63.2" r="1.75" fill="#2e9ad0"/>
<circle cx="705.0" cy="63.2" r="1.75" fill="#2e9ad0"/>
<circle cx="714.0" cy="63.2" r="1.75" fill="#2e9ad0"/>
<circle cx="718.2" cy="63.2" r="1.75" fill="#2e9ad0"/>
<circle cx="721.8" cy="63.2" r="1.75" fill="#2e9ad0"/>
<circle cx="728.3" cy="63.2" r="1.75" fill="#2e9ad0"/>
<circle cx="737.1" cy="63.2" r="1.75" fill="#2e9ad0"/>
<circle cx="770.3" cy="63.2" r="1.75" fill="#2e9ad0"/>
<circle cx="780.1" cy="63.2" r="1.75" fill="#2e9ad0"/>
<circle cx="804.3" cy="63.2" r="1.75" fill="#2e9ad0"/>
<circle cx="809.6" cy="63.2" r="1.75" fill="#2e9ad0"/>
<circle cx="812.4" cy="63.2" r="1.75" fill="#2e9ad0"/>
<circle cx="815.1" cy="63.2" r="1.75" fill="#2e9ad0"/>
<circle cx="817.9" cy="63.2" r="1.75" fill="#2e9ad0"/>
<circle cx="843.3" cy="63.2" r="1.75" fill="#2e9ad0"/>
<circle cx="912.8" cy="63.2" r="1.75" fill="#2e9ad0"/>
<circle cx="915.2" cy="63.2" r="1.75" fill="#2e9ad0"/>
<circle cx="917.5" cy="63.2" r="1.75" fill="#2e9ad0"/>
<circle cx="919.9" cy="63.2" r="1.75" fill="#2e9ad0"/>
<circle cx="922.2" cy="63.2" r="1.75" fill="#2e9ad0"/>
<circle cx="924.6" cy="63.2" r="1.75" fill="#2e9ad0"/>
<circle cx="935.5" cy="63.2" r="1.75" fill="#2e9ad0"/>
<circle cx="944.0" cy="63.2" r="1.75" fill="#2e9ad0"/>
<circle cx="961.0" cy="63.2" r="1.75" fill="#2e9ad0"/>
<circle cx="963.8" cy="63.2" r="1.75" fill="#2e9ad0"/>
<circle cx="966.5" cy="63.2" r="1.75" fill="#2e9ad0"/>
<circle cx="969.2" cy="63.2" r="1.75" fill="#2e9ad0"/>
<circle cx="972.0" cy="63.2" r="1.75" fill="#2e9ad0"/>
<circle cx="28.5" cy="66.4" r="1.75" fill="#2e9ad0"/>
<circle cx="83.9" cy="66.4" r="1.75" fill="#2e9ad0"/>
<circle cx="129.7" cy="66.4" r="1.75" fill="#2e9ad0"/>
<circle cx="189.8" cy="66.4" r="1.75" fill="#2e9ad0"/>
<circle cx="499.7" cy="66.4" r="1.75" fill="#2e9ad0"/>
<circle cx="502.4" cy="66.4" r="1.75" fill="#2e9ad0"/>
<circle cx="505.0" cy="66.4" r="1.75" fill="#2e9ad0"/>
<circle cx="507.6" cy="66.4" r="1.75" fill="#2e9ad0"/>
<circle cx="510.3" cy="66.4" r="1.75" fill="#2e9ad0"/>
<circle cx="662.1" cy="66.4" r="1.75" fill="#2e9ad0"/>
<circle cx="707.7" cy="66.4" r="1.75" fill="#2e9ad0"/>
<circle cx="711.7" cy="66.4" r="1.75" fill="#2e9ad0"/>
<circle cx="714.0" cy="66.4" r="1.75" fill="#2e9ad0"/>
<circle cx="716.4" cy="66.4" r="1.75" fill="#2e9ad0"/>
<circle cx="903.9" cy="66.4" r="1.75" fill="#2e9ad0"/>
<circle cx="921.1" cy="66.4" r="1.75" fill="#2e9ad0"/>
<circle cx="995.3" cy="66.4" r="1.75" fill="#2e9ad0"/>
<circle cx="1004.2" cy="66.4" r="1.75" fill="#2e9ad0"/>
<circle cx="48.4" cy="69.6" r="1.75" fill="#2e9ad0"/>
<circle cx="54.9" cy="69.6" r="1.75" fill="#2e9ad0"/>
<circle cx="76.2" cy="69.6" r="1.75" fill="#2e9ad0"/>
<circle cx="89.8" cy="69.6" r="1.75" fill="#2e9ad0"/>
<circle cx="163.5" cy="69.6" r="1.75" fill="#2e9ad0"/>
<circle cx="176.0" cy="69.6" r="1.75" fill="#2e9ad0"/>
<circle cx="214.0" cy="69.6" r="1.75" fill="#2e9ad0"/>
<circle cx="237.7" cy="69.6" r="1.75" fill="#2e9ad0"/>
<circle cx="259.2" cy="69.6" r="1.75" fill="#2e9ad0"/>
<circle cx="318.8" cy="69.6" r="1.75" fill="#2e9ad0"/>
<circle cx="338.8" cy="69.6" r="1.75" fill="#2e9ad0"/>
<circle cx="348.9" cy="69.6" r="1.75" fill="#2e9ad0"/>
<circle cx="351.5" cy="69.6" r="1.75" fill="#2e9ad0"/>
<circle cx="354.2" cy="69.6" r="1.75" fill="#2e9ad0"/>
<circle cx="439.6" cy="69.6" r="1.75" fill="#2e9ad0"/>
<circle cx="446.2" cy="69.6" r="1.75" fill="#2e9ad0"/>
<circle cx="451.5" cy="69.6" r="1.75" fill="#2e9ad0"/>
<circle cx="456.8" cy="69.6" r="1.75" fill="#2e9ad0"/>
<circle cx="487.2" cy="69.6" r="1.75" fill="#2e9ad0"/>
<circle cx="496.1" cy="69.6" r="1.75" fill="#2e9ad0"/>
<circle cx="500.3" cy="69.6" r="1.75" fill="#2e9ad0"/>
<circle cx="517.4" cy="69.6" r="1.75" fill="#2e9ad0"/>
<circle cx="521.0" cy="69.6" r="1.75" fill="#2e9ad0"/>
<circle cx="552.6" cy="69.6" r="1.75" fill="#2e9ad0"/>
<circle cx="708.5" cy="69.6" r="1.75" fill="#2e9ad0"/>
<circle cx="903.3" cy="69.6" r="1.75" fill="#2e9ad0"/>
<circle cx="1006.6" cy="69.6" r="1.75" fill="#2e9ad0"/>
<circle cx="27.7" cy="76.0" r="1.75" fill="#2e9ad0"/>
<circle cx="33.0" cy="76.0" r="1.75" fill="#2e9ad0"/>
<circle cx="35.4" cy="76.0" r="1.75" fill="#2e9ad0"/>
<circle cx="442.0" cy="76.0" r="1.75" fill="#2e9ad0"/>
<circle cx="504.2" cy="76.0" r="1.75" fill="#2e9ad0"/>
<circle cx="705.5" cy="76.0" r="1.75" fill="#2e9ad0"/>
<circle cx="708.3" cy="76.0" r="1.75" fill="#2e9ad0"/>
<circle cx="711.1" cy="76.0" r="1.75" fill="#2e9ad0"/>
<circle cx="806.6" cy="76.0" r="1.75" fill="#2e9ad0"/>
<circle cx="809.0" cy="76.0" r="1.75" fill="#2e9ad0"/>
<circle cx="906.9" cy="76.0" r="1.75" fill="#2e9ad0"/>
<circle cx="995.3" cy="76.0" r="1.75" fill="#2e9ad0"/>
<circle cx="1003.6" cy="76.0" r="1.75" fill="#2e9ad0"/>
<circle cx="1007.7" cy="76.0" r="1.75" fill="#2e9ad0"/>
<circle cx="45.4" cy="79.2" r="1.75" fill="#2e9ad0"/>
<circle cx="911.0" cy="79.2" r="1.75" fill="#2e9ad0"/>
<circle cx="40.7" cy="82.4" r="1.75" fill="#2e9ad0"/>
<circle cx="43.7" cy="82.4" r="1.75" fill="#2e9ad0"/>
<circle cx="900.4" cy="82.4" r="1.75" fill="#2e9ad0"/>
<circle cx="905.7" cy="82.4" r="1.75" fill="#2e9ad0"/>
<circle cx="998.3" cy="82.4" r="1.75" fill="#2e9ad0"/>
<circle cx="1001.0" cy="82.4" r="1.75" fill="#2e9ad0"/>
<circle cx="1003.6" cy="82.4" r="1.75" fill="#2e9ad0"/>
<circle cx="25.9" cy="85.6" r="1.75" fill="#5a9a32"/>
<circle cx="39.5" cy="85.6" r="1.75" fill="#5a9a32"/>
<circle cx="25.0" cy="88.8" r="1.75" fill="#5a9a32"/>
<circle cx="52.2" cy="88.8" r="1.75" fill="#5a9a32"/>
<circle cx="902.2" cy="88.8" r="1.75" fill="#5a9a32"/>
<circle cx="996.8" cy="88.8" r="1.75" fill="#5a9a32"/>
<circle cx="1001.5" cy="88.8" r="1.75" fill="#5a9a32"/>
<circle cx="662.3" cy="95.2" r="1.75" fill="#5a9a32"/>
<text x="41.5" y="33.6" text-anchor="end" font-size="9" fill="#666" font-family="Liberation Sans">190</text>
<text x="41.5" y="66.1" text-anchor="end" font-size="9" fill="#666" font-family="Liberation Sans">180</text>
<text x="41.5" y="97.3" text-anchor="end" font-size="9" fill="#666" font-family="Liberation Sans">170</text>
<text x="86.9" y="91.9" text-anchor="middle" font-size="9" fill="#666" font-family="Liberation Sans">4:10</text>
<text x="159.3" y="91.9" text-anchor="middle" font-size="9" fill="#666" font-family="Liberation Sans">8:20</text>
<text x="229.4" y="91.9" text-anchor="middle" font-size="9" fill="#666" font-family="Liberation Sans">12:30</text>
<text x="301.9" y="91.9" text-anchor="middle" font-size="9" fill="#666" font-family="Liberation Sans">16:40</text>
<text x="373.7" y="91.9" text-anchor="middle" font-size="9" fill="#666" font-family="Liberation Sans">20:50</text>
<text x="446.4" y="91.9" text-anchor="middle" font-size="9" fill="#666" font-family="Liberation Sans">25:00</text>
<text x="518.7" y="91.9" text-anchor="middle" font-size="9" fill="#666" font-family="Liberation Sans">29:10</text>
<text x="591.3" y="91.9" text-anchor="middle" font-size="9" fill="#666" font-family="Liberation Sans">33:20</text>
<text x="663.7" y="91.9" text-anchor="middle" font-size="9" fill="#666" font-family="Liberation Sans">37:30</text>
<text x="735.6" y="91.9" text-anchor="middle" font-size="9" fill="#666" font-family="Liberation Sans">41:40</text>
<text x="808.1" y="91.9" text-anchor="middle" font-size="9" fill="#666" font-family="Liberation Sans">45:50</text>
<text x="880.5" y="91.9" text-anchor="middle" font-size="9" fill="#666" font-family="Liberation Sans">50:00</text>
<text x="953" y="91.9" text-anchor="middle" font-size="9" fill="#666" font-family="Liberation Sans">54:10</text>
<rect x="925" y="62" width="68" height="18" fill="#fff" fill-opacity="0.85"/>
<text x="928.2" y="74.6" font-size="10" fill="#606060" font-family="Liberation Sans">Avg: 181 spm</text>
<line x1="812" y1="53" x2="812" y2="96" stroke="#666" stroke-width="1.3"/>
<rect x="793" y="32.2" width="38.1" height="21.6" fill="#13294b"/>
<text x="811.5" y="45.6" text-anchor="middle" font-size="9.6" font-weight="bold" fill="#eef0f4" font-family="Liberation Sans">45:24</text>
</svg>
<div class="tab" style="left:18.5px">Stats</div>
<div class="tab" style="left:60px;color:#444">Intervals</div>
<div class="tab" style="left:120px">Segments</div>
<div style="position:absolute;left:172.2px;top:141.7px;width:11.8px;height:11.8px;border-radius:50%;background:#1e6fc2;color:#fff;font-size:8.5px;line-height:11.8px;text-align:center;font-weight:bold">3</div>
<div class="tab" style="left:201.5px">Time in Zones</div>
<div style="position:absolute;left:10px;top:158.8px;width:1006px;height:1px;background:#dedede"></div>
<div style="position:absolute;left:52.7px;top:157.8px;width:58px;height:2px;background:#2f7bbf"></div>
<div style="position:absolute;left:10.5px;top:180.5px;font-size:11px;color:#333;line-height:14px">Step Type</div>
<div style="position:absolute;left:71.5px;top:175.3px;width:89px;height:21.5px;border:1px solid #d4d4d4;border-radius:2px;box-shadow:0 1px 1px rgba(0,0,0,0.08);background:#fff"></div>
<div style="position:absolute;left:77.3px;top:183px;font-size:9.5px;color:#333;line-height:12px">All</div>
<svg width="6" height="9" style="position:absolute;left:151.5px;top:183px"><path d="M2.5 0 L4.3 2.9 H0.7 Z M2.5 7.5 L4.3 4.6 H0.7 Z" fill="#444"/></svg>
<div class="c h" style="left:14px;top:225px">Interval</div>
<div class="c h" style="left:86px;top:225px">Step Type</div>
<div class="c h" style="left:150px;top:225px">Lap</div>
<div class="c h" style="left:201px;top:225px">Time</div>
<div class="c h" style="left:284px;top:225px">Cumulative Time</div>
<div class="c h" style="left:375.5px;top:225px">Distance</div>
<div class="c h" style="left:449px;top:225px">Avg Pace</div>
<div class="c h" style="left:517.5px;top:225px">Avg HR</div>
<div class="c h" style="left:584.5px;top:225px">Max HR</div>
<div class="c h" style="left:656px;top:225px">Elev Gain</div>
<div class="c h" style="left:731px;top:225px">Elev Loss</div>
<div class="c h" style="left:825px;top:225px">Avg Run Cadence</div>
<div class="h" style="position:absolute;left:958.5px;top:225px;white-space:nowrap;width:56px;overflow:hidden">Avg Stride Length</div>
<div class="ln" style="top:239.80px"></div>
<div class="c d" style="left:86px;top:247.00px">Warm Up</div>
<div class="c d" style="left:150px;top:247.00px">1</div>
<div class="c d" style="left:201px;top:247.00px">1:33.3</div>
<div class="c d" style="left:284px;top:247.00px">1:33.3</div>
<div class="c d" style="left:375.5px;top:247.00px">0.15</div>
<div class="c d" style="left:449px;top:247.00px">10:20</div>
<div class="c d" style="left:517.5px;top:247.00px">129</div>
<div class="c d" style="left:584.5px;top:247.00px">153</div>
<div class="c d" style="left:656px;top:247.00px">0</div>
<div class="c d" style="left:731px;top:247.00px">10</div>
<div class="c d" style="left:825px;top:247.00px">85</div>
<div class="d r" style="top:247.00px">0.91</div>
<div class="grn" style="top:268.42px;height:28.12px"></div>
<div class="tri" style="top:276.42px"></div>
<div class="c d" style="left:14px;top:275.12px">1</div>
<div class="c d" style="left:86px;top:275.12px">Run</div>
<div class="c d" style="left:150px;top:275.12px">2 - 8</div>
<div class="c d" style="left:201px;top:275.12px">48:45</div>
<div class="c d" style="left:284px;top:275.12px">48:45</div>
<div class="c d" style="left:375.5px;top:275.12px">6.20</div>
<div class="c d" style="left:449px;top:275.12px">7:52</div>
<div class="c d" style="left:517.5px;top:275.12px">172</div>
<div class="c d" style="left:584.5px;top:275.12px">187</div>
<div class="c d" style="left:656px;top:275.12px">154</div>
<div class="c d" style="left:731px;top:275.12px">180</div>
<div class="c d" style="left:825px;top:275.12px">90</div>
<div class="d r" style="top:275.12px">1.13</div>
<div class="c d" style="left:86px;top:303.24px">Run</div>
<div class="c d" style="left:150px;top:303.24px">2</div>
<div class="c d" style="left:201px;top:303.24px">7:33.9</div>
<div class="c d" style="left:284px;top:303.24px">7:33.9</div>
<div class="c d" style="left:375.5px;top:303.24px">1.00</div>
<div class="c d" style="left:449px;top:303.24px">7:34</div>
<div class="c d" style="left:517.5px;top:303.24px">160</div>
<div class="c d" style="left:584.5px;top:303.24px">170</div>
<div class="c d" style="left:656px;top:303.24px">13</div>
<div class="c d" style="left:731px;top:303.24px">7</div>
<div class="c d" style="left:825px;top:303.24px">179</div>
<div class="d r" style="top:303.24px">1.19</div>
<div class="ln" style="top:324.16px"></div>
<div class="c d" style="left:86px;top:331.36px">Run</div>
<div class="c d" style="left:150px;top:331.36px">3</div>
<div class="c d" style="left:201px;top:331.36px">7:48.3</div>
<div class="c d" style="left:284px;top:331.36px">7:48.3</div>
<div class="c d" style="left:375.5px;top:331.36px">1.00</div>
<div class="c d" style="left:449px;top:331.36px">7:48</div>
<div class="c d" style="left:517.5px;top:331.36px">170</div>
<div class="c d" style="left:584.5px;top:331.36px">178</div>
<div class="c d" style="left:656px;top:331.36px">7</div>
<div class="c d" style="left:731px;top:331.36px">13</div>
<div class="c d" style="left:825px;top:331.36px">182</div>
<div class="d r" style="top:331.36px">1.13</div>
<div class="ln" style="top:352.28px"></div>
<div class="c d" style="left:86px;top:359.48px">Run</div>
<div class="c d" style="left:150px;top:359.48px">4</div>
<div class="c d" style="left:201px;top:359.48px">8:07.4</div>
<div class="c d" style="left:284px;top:359.48px">8:07.4</div>
<div class="c d" style="left:375.5px;top:359.48px">1.00</div>
<div class="c d" style="left:449px;top:359.48px">8:07</div>
<div class="c d" style="left:517.5px;top:359.48px">172</div>
<div class="c d" style="left:584.5px;top:359.48px">181</div>
<div class="c d" style="left:656px;top:359.48px">16</div>
<div class="c d" style="left:731px;top:359.48px">39</div>
<div class="c d" style="left:825px;top:359.48px">181</div>
<div class="d r" style="top:359.48px">1.09</div>
<div class="ln" style="top:380.40px"></div>
<div class="c d" style="left:86px;top:387.60px">Run</div>
<div class="c d" style="left:150px;top:387.60px">5</div>
<div class="c d" style="left:201px;top:387.60px">8:21.5</div>
<div class="c d" style="left:284px;top:387.60px">8:21.5</div>
<div class="c d" style="left:375.5px;top:387.60px">1.00</div>
<div class="c d" style="left:449px;top:387.60px">8:22</div>
<div class="c d" style="left:517.5px;top:387.60px">176</div>
<div class="c d" style="left:584.5px;top:387.60px">184</div>
<div class="c d" style="left:656px;top:387.60px">69</div>
<div class="c d" style="left:731px;top:387.60px">59</div>
<div class="c d" style="left:825px;top:387.60px">181</div>
<div class="d r" style="top:387.60px">1.06</div>
<div class="ln" style="top:408.52px"></div>
<div class="c d" style="left:86px;top:415.72px">Run</div>
<div class="c d" style="left:150px;top:415.72px">6</div>
<div class="c d" style="left:201px;top:415.72px">7:52.7</div>
<div class="c d" style="left:284px;top:415.72px">7:52.7</div>
<div class="c d" style="left:375.5px;top:415.72px">1.00</div>
<div class="c d" style="left:449px;top:415.72px">7:53</div>
<div class="c d" style="left:517.5px;top:415.72px">174</div>
<div class="c d" style="left:584.5px;top:415.72px">186</div>
<div class="c d" style="left:656px;top:415.72px">43</div>
<div class="c d" style="left:731px;top:415.72px">46</div>
<div class="c d" style="left:825px;top:415.72px">182</div>
<div class="d r" style="top:415.72px">1.12</div>
<div class="ln" style="top:436.64px"></div>
<div class="c d" style="left:86px;top:443.84px">Run</div>
<div class="c d" style="left:150px;top:443.84px">7</div>
<div class="c d" style="left:201px;top:443.84px">7:34.9</div>
<div class="c d" style="left:284px;top:443.84px">7:34.9</div>
<div class="c d" style="left:375.5px;top:443.84px">1.00</div>
<div class="c d" style="left:449px;top:443.84px">7:35</div>
<div class="c d" style="left:517.5px;top:443.84px">179</div>
<div class="c d" style="left:584.5px;top:443.84px">187</div>
<div class="c d" style="left:656px;top:443.84px">7</div>
<div class="c d" style="left:731px;top:443.84px">16</div>
<div class="c d" style="left:825px;top:443.84px">184</div>
<div class="d r" style="top:443.84px">1.16</div>
<div class="ln" style="top:464.76px"></div>
<div class="c d" style="left:86px;top:471.96px">Run</div>
<div class="c d" style="left:150px;top:471.96px">8</div>
<div class="c d" style="left:201px;top:471.96px">1:26.7</div>
<div class="c d" style="left:284px;top:471.96px">1:26.7</div>
<div class="c d" style="left:375.5px;top:471.96px">0.20</div>
<div class="c d" style="left:449px;top:471.96px">7:13</div>
<div class="c d" style="left:517.5px;top:471.96px">182</div>
<div class="c d" style="left:584.5px;top:471.96px">187</div>
<div class="c d" style="left:656px;top:471.96px">0</div>
<div class="c d" style="left:731px;top:471.96px">0</div>
<div class="c d" style="left:825px;top:471.96px">185</div>
<div class="d r" style="top:471.96px">1.21</div>
<div class="grn" style="top:493.38px;height:28.12px"></div>
<div class="tri" style="top:501.38px"></div>
<div class="c d" style="left:86px;top:500.08px">Cool Down</div>
<div class="c d" style="left:150px;top:500.08px">9 - 10</div>
<div class="c d" style="left:201px;top:500.08px">6:21.0</div>
<div class="c d" style="left:284px;top:500.08px">6:21.0</div>
<div class="c d" style="left:375.5px;top:500.08px">0.75</div>
<div class="c d" style="left:449px;top:500.08px">8:28</div>
<div class="c d" style="left:517.5px;top:500.08px">177</div>
<div class="c d" style="left:584.5px;top:500.08px">185</div>
<div class="c d" style="left:656px;top:500.08px">7</div>
<div class="c d" style="left:731px;top:500.08px">0</div>
<div class="c d" style="left:825px;top:500.08px">90</div>
<div class="d r" style="top:500.08px">1.06</div>
<div class="c d" style="left:86px;top:528.20px">Cool Down</div>
<div class="c d" style="left:150px;top:528.20px">9</div>
<div class="c d" style="left:201px;top:528.20px">5:25.1</div>
<div class="c d" style="left:284px;top:528.20px">5:25.1</div>
<div class="c d" style="left:375.5px;top:528.20px">0.65</div>
<div class="c d" style="left:449px;top:528.20px">8:19</div>
<div class="c d" style="left:517.5px;top:528.20px">177</div>
<div class="c d" style="left:584.5px;top:528.20px">185</div>
<div class="c d" style="left:656px;top:528.20px">0</div>
<div class="c d" style="left:731px;top:528.20px">0</div>
<div class="c d" style="left:825px;top:528.20px">180</div>
<div class="d r" style="top:528.20px">1.07</div>
<div class="ln" style="top:549.12px"></div>
<div class="c d" style="left:86px;top:556.32px">Cool Down</div>
<div class="c d" style="left:150px;top:556.32px">10</div>
<div class="c d" style="left:201px;top:556.32px">0:55.9</div>
<div class="c d" style="left:284px;top:556.32px">0:55.9</div>
<div class="c d" style="left:375.5px;top:556.32px">0.10</div>
<div class="c d" style="left:449px;top:556.32px">9:28</div>
<div class="c d" style="left:517.5px;top:556.32px">180</div>
<div class="c d" style="left:584.5px;top:556.32px">182</div>
<div class="c d" style="left:656px;top:556.32px">7</div>
<div class="c d" style="left:731px;top:556.32px">0</div>
<div class="c d" style="left:825px;top:556.32px">177</div>
<div class="d r" style="top:556.32px">0.96</div>
<div class="ln" style="top:577.24px"></div>
<div class="c d b" style="left:14px;top:584.44px">Summary</div>
<div class="c d b" style="left:86px;top:584.44px">--</div>
<div class="c d b" style="left:150px;top:584.44px">--</div>
<div class="c d b" style="left:201px;top:584.44px">56:40</div>
<div class="c d b" style="left:284px;top:584.44px">56:40</div>
<div class="c d b" style="left:375.5px;top:584.44px">7.10</div>
<div class="c d b" style="left:449px;top:584.44px">7:59</div>
<div class="c d b" style="left:517.5px;top:584.44px">172</div>
<div class="c d b" style="left:584.5px;top:584.44px">187</div>
<div class="c d b" style="left:656px;top:584.44px">164</div>
<div class="c d b" style="left:731px;top:584.44px">187</div>
<div class="c d b" style="left:825px;top:584.44px">181</div>
<div class="d b r" style="top:584.44px">1.11</div>
<div style="position:absolute;left:10px;top:605px;width:1006px;height:15.5px;background:#f1f1f1"></div>
<div style="position:absolute;left:24.6px;top:608px;width:646.4px;height:10.6px;background:#c1c1c1"></div>
<svg width="6" height="8" style="position:absolute;left:14.5px;top:609px"><path d="M5 0 V8 L1 4 Z" fill="#a3a3a3"/></svg>
<svg width="6" height="8" style="position:absolute;left:1006px;top:609px"><path d="M1 0 V8 L5 4 Z" fill="#505050"/></svg>
</body></html>
